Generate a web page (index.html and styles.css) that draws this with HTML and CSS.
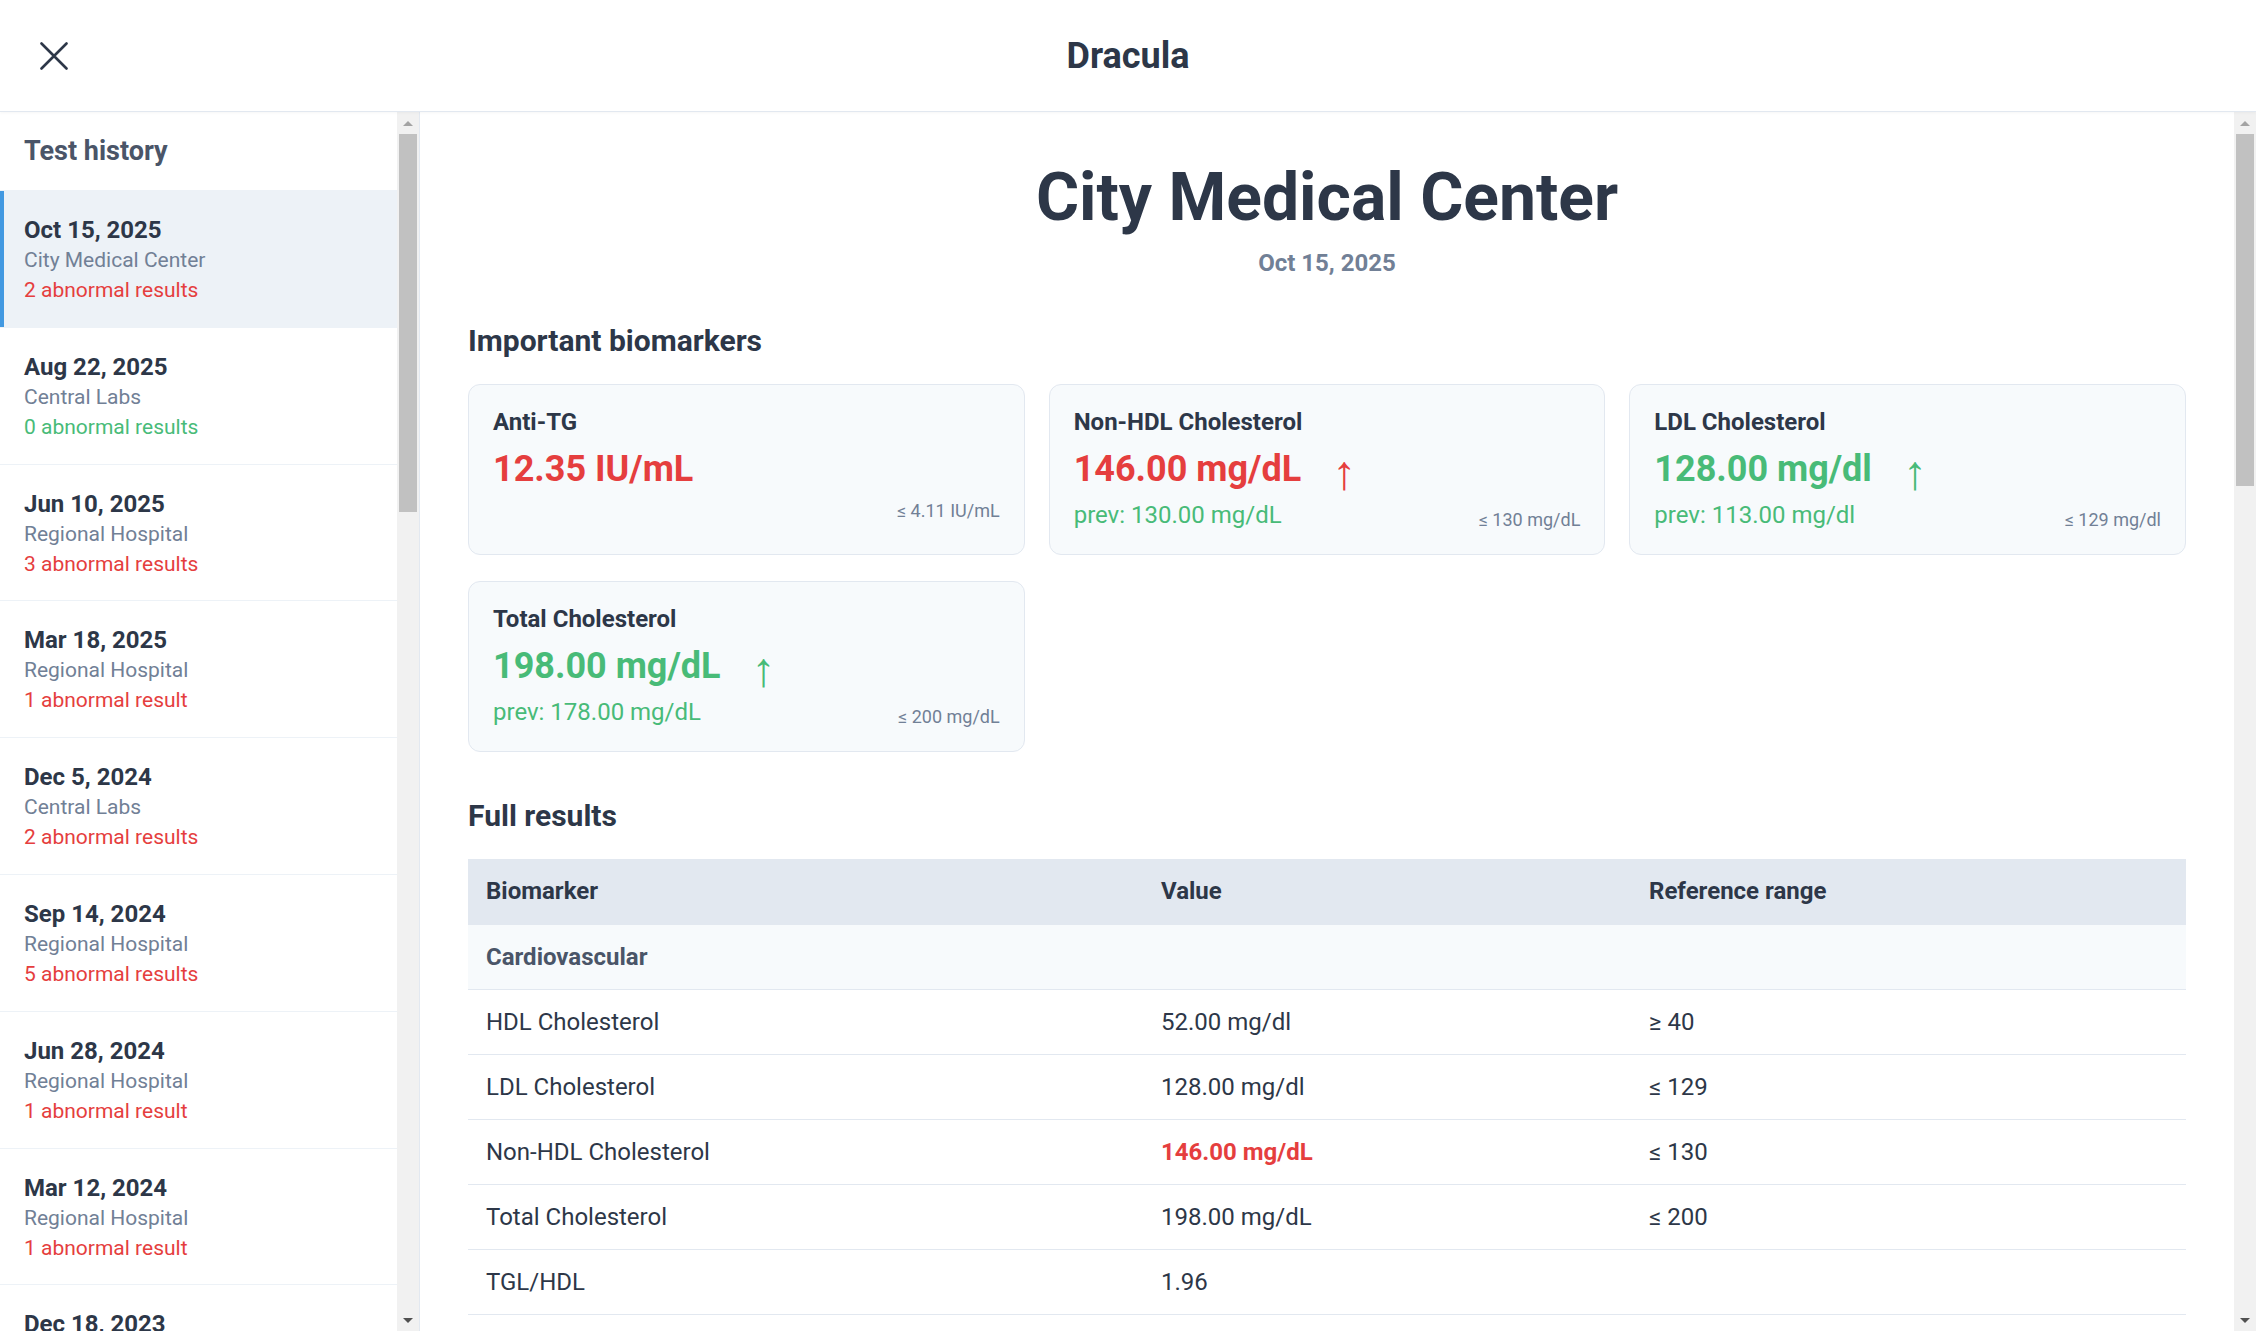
FILE: index.html
```html
<!DOCTYPE html>
<html lang="en">
<head>
<meta charset="utf-8">
<title>Dracula – Test history</title>
<link rel="stylesheet" href="styles.css">
</head>
<body>
<div class="app">
  <header class="topbar">
    <button class="close-btn" aria-label="Close">
      <svg width="28" height="28" viewBox="0 0 28 28" aria-hidden="true"><path d="M1.5 1.5L26.5 26.5M26.5 1.5L1.5 26.5" fill="none" stroke="#2d3748" stroke-width="2.6" stroke-linecap="round"/></svg>
    </button>
    <h1 class="topbar-title">Dracula</h1>
    <div class="topbar-spacer"></div>
  </header>

  <div class="layout">
    <aside class="sidebar">
      <div class="sidebar-scroll">
        <h2 class="sidebar-title">Test history</h2>
        <ul class="history">
          <li class="history-item is-active"><div class="h-date">Oct 15, 2025</div><div class="h-place">City Medical Center</div><div class="h-status bad">2 abnormal results</div></li>
          <li class="history-item"><div class="h-date">Aug 22, 2025</div><div class="h-place">Central Labs</div><div class="h-status good">0 abnormal results</div></li>
          <li class="history-item"><div class="h-date">Jun 10, 2025</div><div class="h-place">Regional Hospital</div><div class="h-status bad">3 abnormal results</div></li>
          <li class="history-item"><div class="h-date">Mar 18, 2025</div><div class="h-place">Regional Hospital</div><div class="h-status bad">1 abnormal result</div></li>
          <li class="history-item"><div class="h-date">Dec 5, 2024</div><div class="h-place">Central Labs</div><div class="h-status bad">2 abnormal results</div></li>
          <li class="history-item"><div class="h-date">Sep 14, 2024</div><div class="h-place">Regional Hospital</div><div class="h-status bad">5 abnormal results</div></li>
          <li class="history-item"><div class="h-date">Jun 28, 2024</div><div class="h-place">Regional Hospital</div><div class="h-status bad">1 abnormal result</div></li>
          <li class="history-item"><div class="h-date">Mar 12, 2024</div><div class="h-place">Regional Hospital</div><div class="h-status bad">1 abnormal result</div></li>
          <li class="history-item"><div class="h-date">Dec 18, 2023</div></li>
        </ul>
      </div>
      <div class="scrollbar" aria-hidden="true">
        <div class="sb-btn"><span class="sb-up"></span></div>
        <div class="sb-track"><div class="sb-thumb sb-thumb-side"></div></div>
        <div class="sb-btn"><span class="sb-down"></span></div>
      </div>
    </aside>

    <div class="main">
      <main class="main-scroll">
        <h1 class="report-title">City Medical Center</h1>
        <div class="report-date">Oct 15, 2025</div>

        <h2 class="section-title">Important biomarkers</h2>
        <div class="cards">
          <div class="card">
            <div class="card-name">Anti-TG</div>
            <div class="card-value-row"><span class="card-value bad">12.35 IU/mL</span></div>
            <div class="card-foot"><span class="card-range">≤ 4.11 IU/mL</span></div>
          </div>
          <div class="card">
            <div class="card-name">Non-HDL Cholesterol</div>
            <div class="card-value-row"><span class="card-value bad">146.00 mg/dL</span><span class="card-arrow bad">↑</span></div>
            <div class="card-foot"><span class="card-prev">prev: 130.00 mg/dL</span><span class="card-range">≤ 130 mg/dL</span></div>
          </div>
          <div class="card">
            <div class="card-name">LDL Cholesterol</div>
            <div class="card-value-row"><span class="card-value good">128.00 mg/dl</span><span class="card-arrow good">↑</span></div>
            <div class="card-foot"><span class="card-prev">prev: 113.00 mg/dl</span><span class="card-range">≤ 129 mg/dl</span></div>
          </div>
          <div class="card">
            <div class="card-name">Total Cholesterol</div>
            <div class="card-value-row"><span class="card-value good">198.00 mg/dL</span><span class="card-arrow good">↑</span></div>
            <div class="card-foot"><span class="card-prev">prev: 178.00 mg/dL</span><span class="card-range">≤ 200 mg/dL</span></div>
          </div>
        </div>

        <h2 class="section-title">Full results</h2>
        <table class="results">
          <colgroup><col class="col-name"><col class="col-value"><col class="col-range"></colgroup>
          <thead>
            <tr><th>Biomarker</th><th>Value</th><th>Reference range</th></tr>
          </thead>
          <tbody>
            <tr class="cat-row"><td colspan="3">Cardiovascular</td></tr>
            <tr><td>HDL Cholesterol</td><td>52.00 mg/dl</td><td>≥ 40</td></tr>
            <tr><td>LDL Cholesterol</td><td>128.00 mg/dl</td><td>≤ 129</td></tr>
            <tr><td>Non-HDL Cholesterol</td><td class="val-bad">146.00 mg/dL</td><td>≤ 130</td></tr>
            <tr><td>Total Cholesterol</td><td>198.00 mg/dL</td><td>≤ 200</td></tr>
            <tr><td>TGL/HDL</td><td>1.96</td><td></td></tr>
          </tbody>
        </table>
      </main>
      <div class="scrollbar" aria-hidden="true">
        <div class="sb-btn"><span class="sb-up"></span></div>
        <div class="sb-track"><div class="sb-thumb sb-thumb-main"></div></div>
        <div class="sb-btn"><span class="sb-down"></span></div>
      </div>
    </div>
  </div>
</div>
</body>
</html>
```

FILE: styles.css
```css
html, body {
  margin: 0;
  height: 100%;
}

body {
  font-family: Roboto, "Noto Sans", "Liberation Sans", sans-serif;
  color: #2d3748;
  background: #ffffff;
  overflow: hidden;
}

.app {
  display: flex;
  flex-direction: column;
  height: 100vh;
}

/* ---------- top bar ---------- */
.topbar {
  flex: 0 0 auto;
  height: 111px;
  display: grid;
  grid-template-columns: 1fr auto 1fr;
  align-items: center;
  padding: 0 40px;
  border-bottom: 1px solid #e2e8f0;
  box-shadow: 0 1px 3px rgba(0, 0, 0, 0.04);
  position: relative;
  z-index: 1;
}

.close-btn {
  justify-self: start;
  width: 28px;
  height: 28px;
  padding: 0;
  border: 0;
  background: none;
  display: flex;
  cursor: pointer;
}

.topbar-title {
  margin: 0;
  font-size: 36px;
  font-weight: 700;
  line-height: 44px;
  color: #2d3748;
}

/* ---------- layout ---------- */
.layout {
  flex: 1 1 auto;
  display: flex;
  min-height: 0;
}

.sidebar {
  flex: 0 0 419px;
  display: flex;
  border-right: 1px solid #e2e8f0;
  overflow: hidden;
}

.sidebar-scroll {
  flex: 1 1 auto;
  min-width: 0;
  overflow: hidden;
}

.main {
  flex: 1 1 auto;
  min-width: 0;
  display: flex;
  overflow: hidden;
}

.main-scroll {
  flex: 1 1 auto;
  min-width: 0;
  overflow: hidden;
  padding: 48px;
}

/* ---------- scrollbars ---------- */
.scrollbar {
  flex: 0 0 22px;
  display: flex;
  flex-direction: column;
  background: #f1f1f1;
}

.sb-btn {
  flex: 0 0 22px;
  display: flex;
  align-items: center;
  justify-content: center;
}

.sb-up {
  width: 0;
  height: 0;
  border-left: 5px solid transparent;
  border-right: 5px solid transparent;
  border-bottom: 5px solid #a3a3a3;
}

.sb-down {
  width: 0;
  height: 0;
  border-left: 5px solid transparent;
  border-right: 5px solid transparent;
  border-top: 5px solid #505050;
}

.sb-track {
  flex: 1 1 auto;
  padding: 0 2px;
}

.sb-thumb {
  background: #c1c1c1;
}

.sb-thumb-side { height: 378px; }
.sb-thumb-main { height: 352px; }

/* ---------- sidebar ---------- */
.sidebar-title {
  margin: 0;
  padding: 19px 24px;
  font-size: 27px;
  line-height: 40px;
  font-weight: 700;
  color: #4a5568;
  border-bottom: 1px solid #edf2f7;
}

.history {
  list-style: none;
  margin: 0;
  padding: 0;
}

.history-item {
  padding: 24px 24px 21.8px;
  border-bottom: 1px solid #edf2f7;
}

.history-item.is-active {
  background: #edf2f7;
  box-shadow: inset 4px 0 0 #4299e1;
}

.h-date {
  font-size: 24px;
  line-height: 30px;
  font-weight: 700;
  color: #2d3748;
}

.h-place {
  font-size: 21px;
  line-height: 30px;
  color: #718096;
}

.h-status {
  font-size: 21px;
  line-height: 30px;
}

.h-status.bad { color: #e53e3e; }
.h-status.good { color: #48bb78; }

/* ---------- report ---------- */
.report-title {
  margin: 0;
  text-align: center;
  font-size: 66px;
  line-height: 76px;
  font-weight: 700;
  color: #2d3748;
}

.report-date {
  margin-top: 9px;
  text-align: center;
  font-size: 24px;
  line-height: 36px;
  font-weight: 700;
  color: #718096;
}

.section-title {
  margin: 40px 0 23px;
  font-size: 30px;
  line-height: 40px;
  font-weight: 700;
  color: #2d3748;
}

.cards {
  display: grid;
  grid-template-columns: repeat(3, 1fr);
  gap: 26px 24px;
  margin-bottom: 44px;
}

.card {
  background: #f7fafc;
  border: 1px solid #e2e8f0;
  border-radius: 12px;
  padding: 22px 24px 21px;
}

.card-name {
  font-size: 24px;
  line-height: 30px;
  font-weight: 700;
  color: #2d3748;
}

.card-value-row {
  display: flex;
  align-items: center;
  margin-top: 8px;
  height: 48px;
}

.card-value {
  font-size: 36px;
  line-height: 48px;
  font-weight: 700;
}

.card-arrow {
  font-size: 48px;
  line-height: 48px;
  font-weight: 400;
  margin-left: 31px;
  margin-top: 7px;
}

.bad { color: #e53e3e; }
.good { color: #48bb78; }

.card-foot {
  display: flex;
  align-items: flex-end;
  margin-top: 4px;
}

.card-prev {
  font-size: 24px;
  line-height: 36px;
  color: #48bb78;
}

.card-range {
  margin-left: auto;
  font-size: 18px;
  line-height: 27px;
  color: #718096;
}

/* ---------- table ---------- */
.results {
  width: 100%;
  border-collapse: collapse;
  font-size: 24px;
  color: #2d3748;
}

.col-name { width: 675px; }
.col-value { width: 488px; }

.results th {
  text-align: left;
  padding: 14px 18px 16px;
  line-height: 36px;
  font-weight: 700;
  background: #e2e8f0;
}

.results td {
  padding: 14px 18px;
  line-height: 36px;
  border-bottom: 1px solid #e2e8f0;
}

.cat-row td {
  background: #f7fafc;
  font-weight: 700;
  color: #4a5568;
}

.results td.val-bad {
  color: #e53e3e;
  font-weight: 700;
}
```
